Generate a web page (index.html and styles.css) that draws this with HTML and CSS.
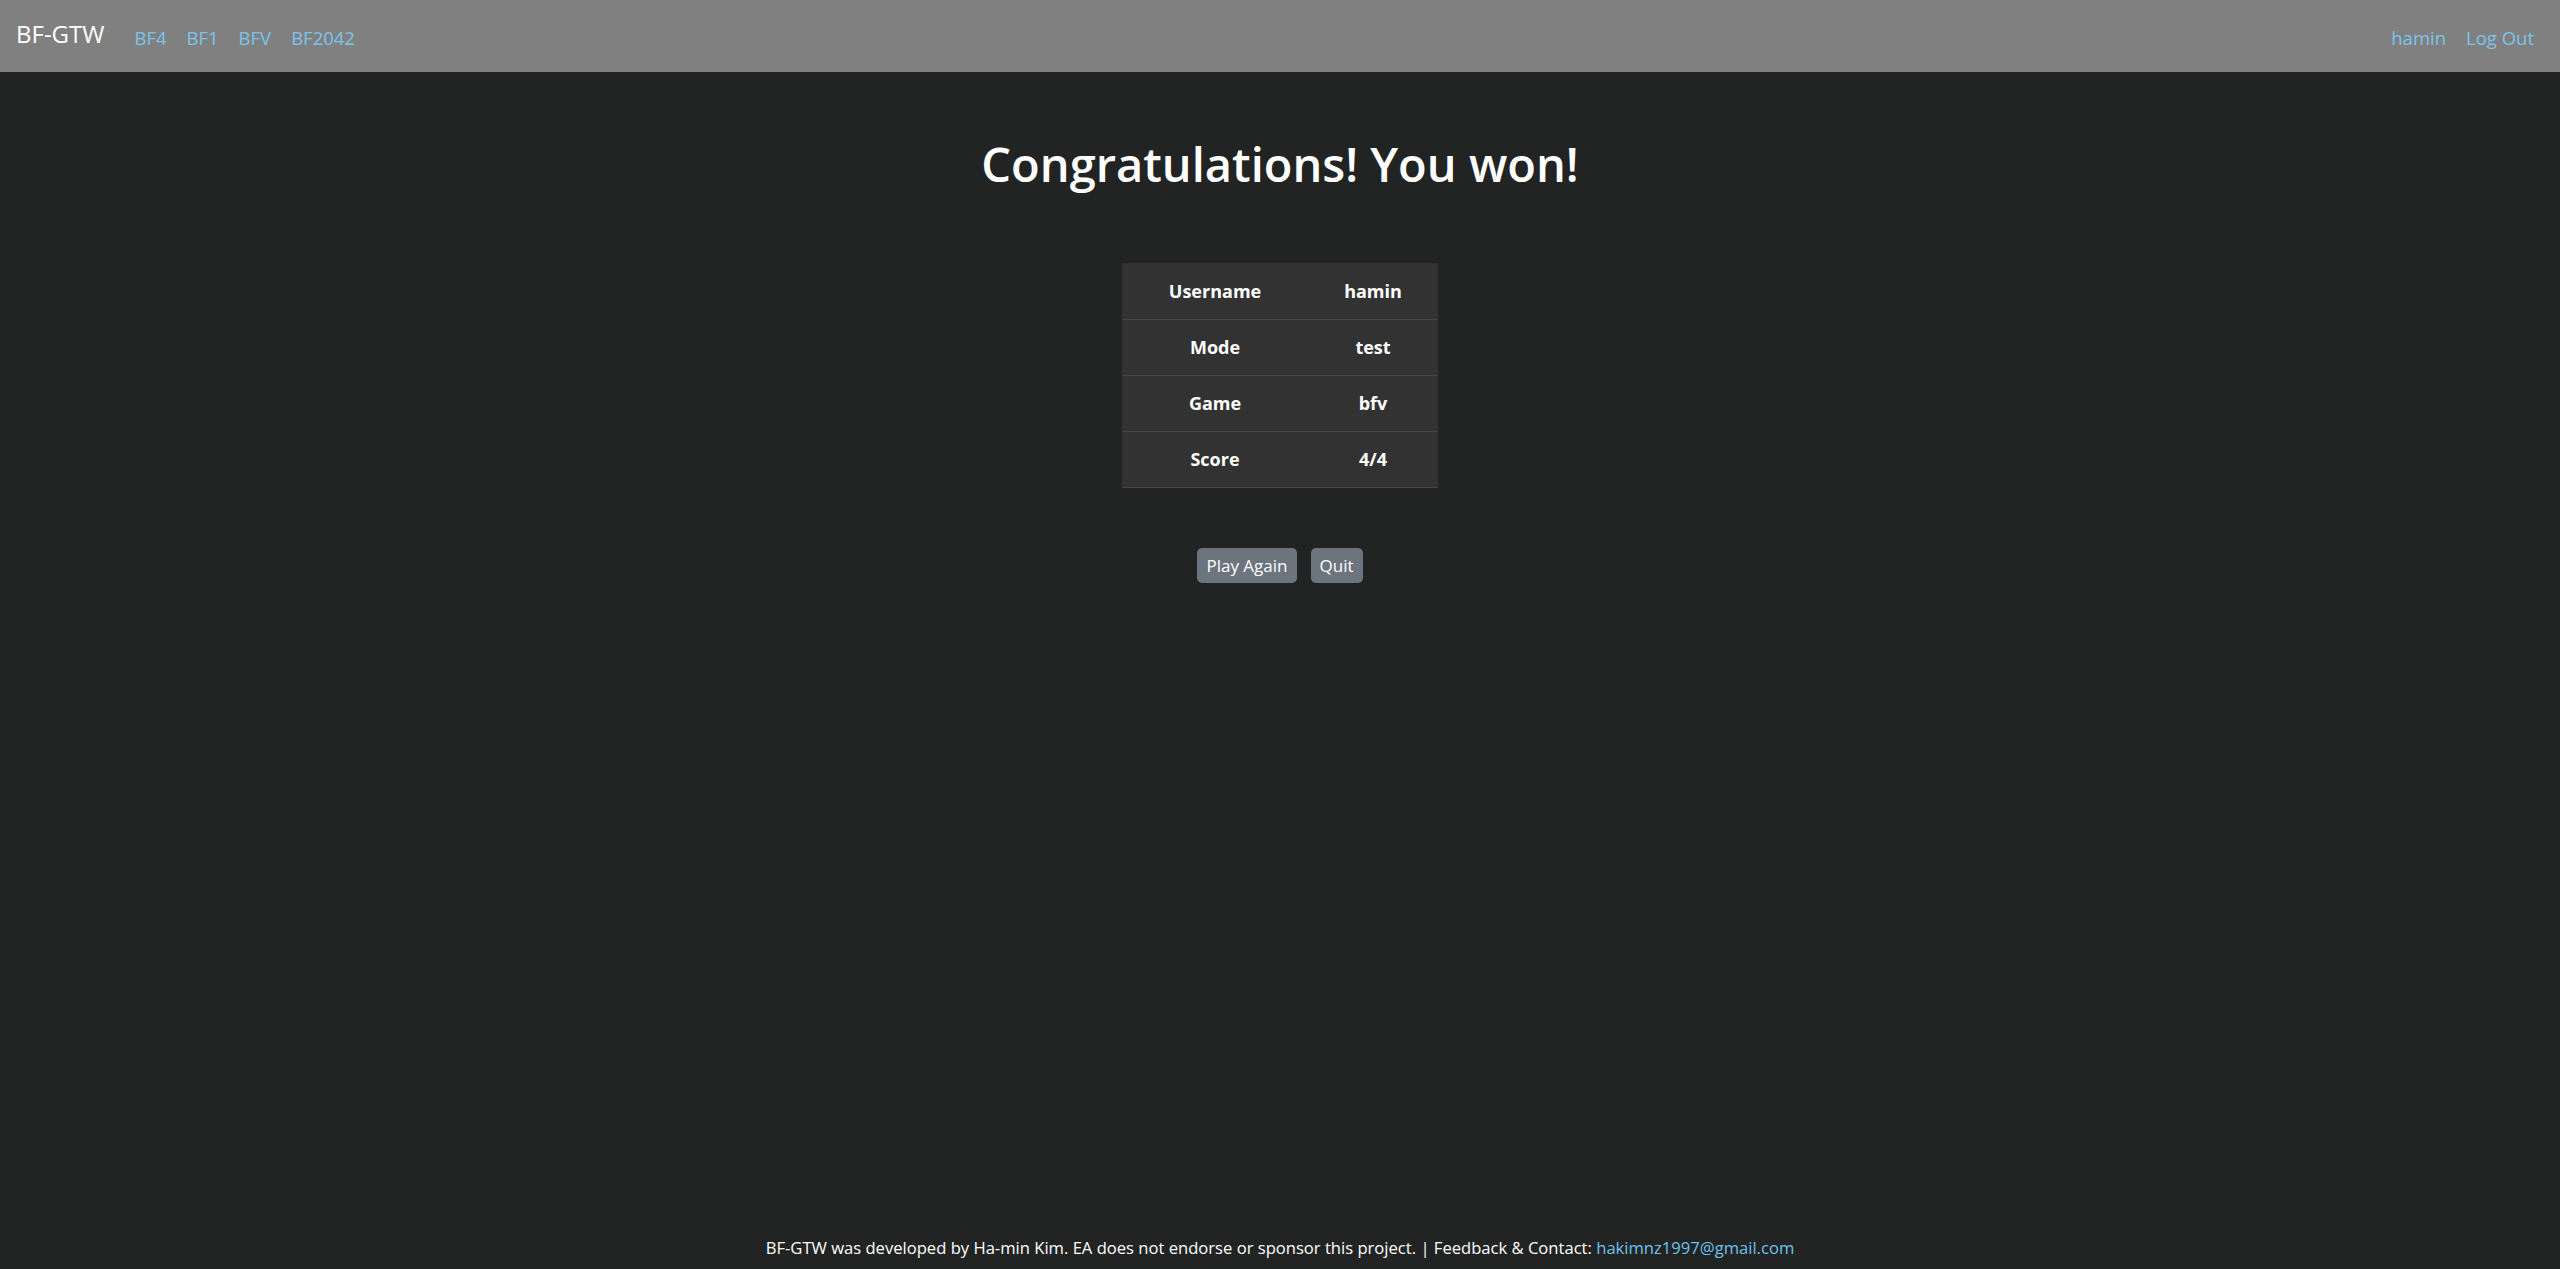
FILE: index.html
```html
<!DOCTYPE html>
<html lang="en">
<head>
<meta charset="utf-8">
<title>BF-GTW</title>
<link rel="stylesheet" href="styles.css">
</head>
<body>
<div class="page">
  <nav class="navbar">
    <div class="nav-left">
      <a class="brand" href="#">BF-GTW</a>
      <a class="nav-link" href="#">BF4</a>
      <a class="nav-link" href="#">BF1</a>
      <a class="nav-link" href="#">BFV</a>
      <a class="nav-link" href="#">BF2042</a>
    </div>
    <div class="nav-right">
      <a class="nav-link" href="#">hamin</a>
      <a class="nav-link" href="#">Log Out</a>
    </div>
  </nav>
  <main class="content">
    <h1 class="title">Congratulations! You won!</h1>
    <table class="result">
      <tbody>
        <tr><th>Username</th><td>hamin</td></tr>
        <tr><th>Mode</th><td>test</td></tr>
        <tr><th>Game</th><td>bfv</td></tr>
        <tr><th>Score</th><td>4/4</td></tr>
      </tbody>
    </table>
    <div class="actions">
      <button class="btn" type="button">Play Again</button>
      <button class="btn" type="button">Quit</button>
    </div>
  </main>
  <footer class="footer">
    BF-GTW was developed by Ha-min Kim. EA does not endorse or sponsor this project. | Feedback &amp; Contact: <a class="mail" href="#">hakimnz1997@gmail.com</a>
  </footer>
</div>
</body>
</html>
```
FILE: styles.css
```css
* { box-sizing: border-box; }
html, body { margin: 0; padding: 0; }
body {
  background: #222424;
  color: #ffffff;
  font-family: "Open Sans", "Noto Sans", "DejaVu Sans", sans-serif;
}
a { text-decoration: none; }
.page {
  min-height: 100vh;
  display: flex;
  flex-direction: column;
}
.navbar {
  height: 72px;
  background: #808080;
  display: flex;
  align-items: center;
  justify-content: space-between;
  padding: 0 26px 0 16px;
}
.nav-left, .nav-right {
  display: flex;
  align-items: center;
}
.brand {
  color: #ffffff;
  font-size: 24px;
  margin-right: 20px;
  margin-top: -6px;
}
.nav-link {
  color: #7cc4ea;
  font-size: 18.5px;
  padding: 3px 10px 0;
}
.nav-right .nav-link:last-child { padding-right: 0; }
.content {
  flex: 1;
  display: flex;
  flex-direction: column;
  align-items: center;
}
.title {
  margin: 64px 0 0;
  font-size: 47px;
  font-weight: 600;
  line-height: 1.2;
}
.result {
  margin-top: 71px;
  border-collapse: collapse;
  background: #323232;
}
.result th, .result td {
  height: 56px;
  text-align: center;
  font-size: 18px;
  font-weight: 700;
  border-bottom: 1px solid #464646;
  padding: 0;
}
.result th { width: 186px; }
.result td { width: 130px; }
.actions {
  margin-top: 60px;
  display: flex;
  gap: 14px;
}
.btn {
  background: #6c757d;
  color: #ffffff;
  border: none;
  border-radius: 5px;
  height: 35px;
  padding: 0 9px;
  font-family: inherit;
  font-size: 17px;
}
.footer {
  text-align: center;
  font-size: 16.6px;
  padding-bottom: 10px;
  color: #ffffff;
}
.mail { color: #6ec1ea; }
```
